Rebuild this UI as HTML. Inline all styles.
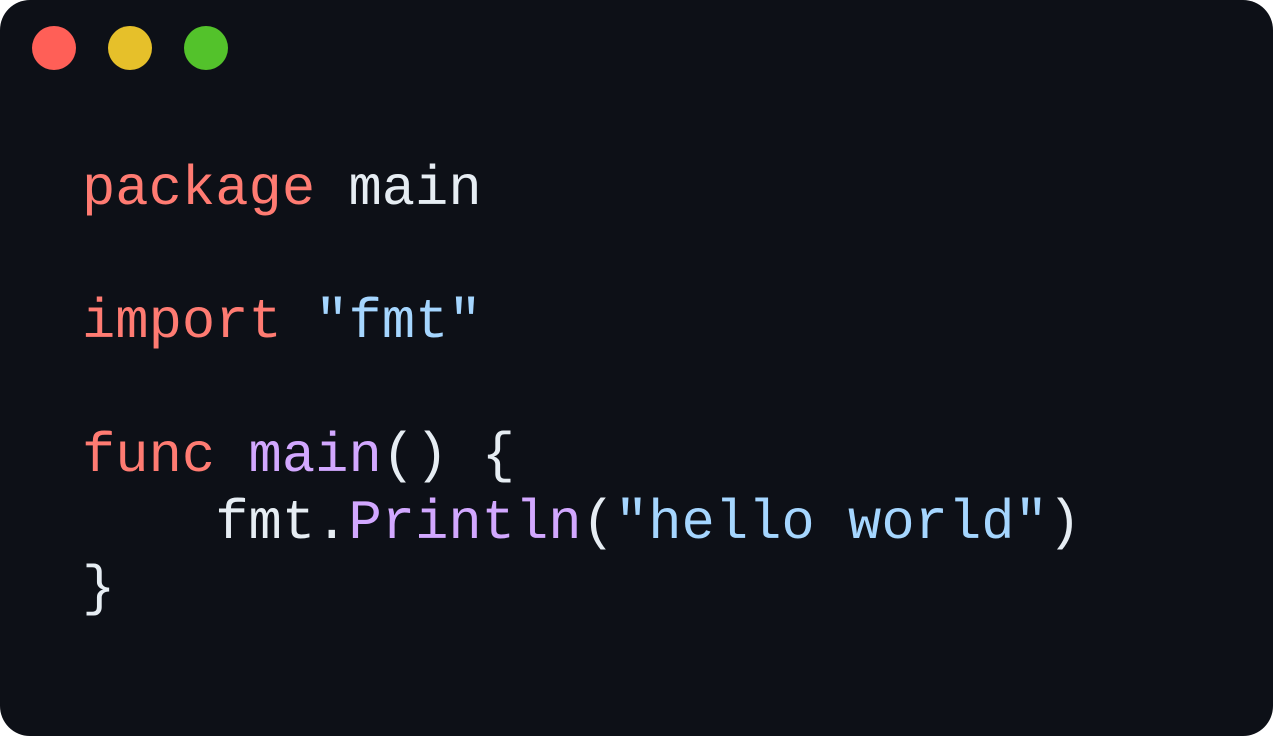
<!DOCTYPE html>
<html><head><style>
html,body{margin:0;padding:0;background:#fff;width:1273px;height:736px;overflow:hidden}
.win{position:absolute;left:0;top:0;width:1273px;height:736px;background:#0d1017;border-radius:30px}
.dot{position:absolute;top:26px;width:44px;height:44px;border-radius:50%}
pre{position:absolute;left:82px;top:157px;margin:0;font-family:"Liberation Mono","DejaVu Sans Mono",monospace;font-size:55.5px;line-height:66.7px;color:#e6edf3}
.k{color:#ff7b72}.f{color:#d2a8ff}.s{color:#a5d6ff}
</style></head><body>
<div class="win">
<div class="dot" style="left:32px;background:#ff5f57"></div>
<div class="dot" style="left:108px;background:#e6c02a"></div>
<div class="dot" style="left:184px;background:#53c22b"></div>
<pre><span class="k">package</span> main

<span class="k">import</span> <span class="s">"fmt"</span>

<span class="k">func</span> <span class="f">main</span>() {
    fmt.<span class="f">Println</span>(<span class="s">"hello world"</span>)
}</pre>
</div>
</body></html>
